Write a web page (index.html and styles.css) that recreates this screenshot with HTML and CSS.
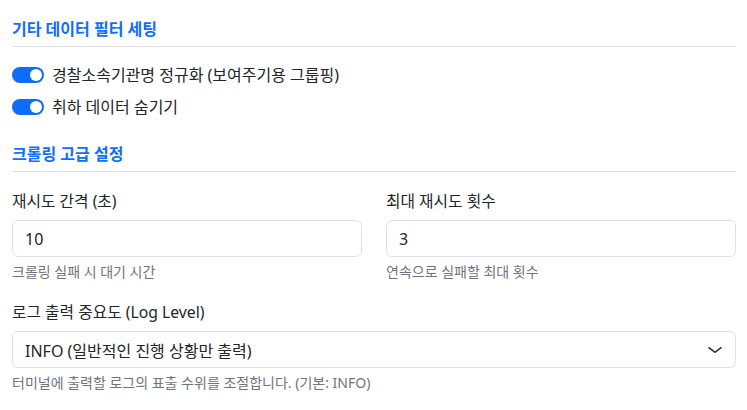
FILE: index.html
```html
<!DOCTYPE html>
<html lang="ko">
<head>
<meta charset="utf-8">
<title>설정</title>
<link rel="stylesheet" href="styles.css">
</head>
<body>
<div class="page">
  <section class="group">
    <h6 class="group-title">기타 데이터 필터 세팅</h6>
    <div class="switches">
      <label class="switch-row">
        <span class="switch"><span class="knob"></span></span>
        <span class="switch-label">경찰소속기관명 정규화 (보여주기용 그룹핑)</span>
      </label>
      <label class="switch-row">
        <span class="switch"><span class="knob"></span></span>
        <span class="switch-label">취하 데이터 숨기기</span>
      </label>
    </div>
  </section>

  <section class="group group-second">
    <h6 class="group-title">크롤링 고급 설정</h6>
    <div class="fields-grid">
      <div class="field">
        <label class="field-label">재시도 간격 (초)</label>
        <input class="field-input" type="text" value="10">
        <div class="field-help">크롤링 실패 시 대기 시간</div>
      </div>
      <div class="field">
        <label class="field-label">최대 재시도 횟수</label>
        <input class="field-input" type="text" value="3">
        <div class="field-help">연속으로 실패할 최대 횟수</div>
      </div>
    </div>
    <div class="field field-wide">
      <label class="field-label">로그 출력 중요도 (Log Level)</label>
      <div class="field-select">
        <span>INFO (일반적인 진행 상황만 출력)</span>
        <svg class="chevron" width="16" height="12" viewBox="0 0 16 16" preserveAspectRatio="none"><path d="m2 5 6 6 6-6" fill="none" stroke="#343a40" stroke-width="2" stroke-linecap="round" stroke-linejoin="round"/></svg>
      </div>
      <div class="field-help">터미널에 출력할 로그의 표출 수위를 조절합니다. (기본: INFO)</div>
    </div>
  </section>
</div>
</body>
</html>
```

FILE: styles.css
```css
* { box-sizing: border-box; }

html, body {
  margin: 0;
  padding: 0;
  background: #ffffff;
}

body {
  font-family: "Noto Sans", "Noto Sans CJK KR", sans-serif;
  color: #212529;
  font-size: 15px;
}

.page {
  padding: 18px 11px 0 12px;
}

.group-title {
  margin: 0;
  font-size: 16px;
  line-height: 22px;
  font-weight: 600;
  color: #0d6efd;
  padding-bottom: 6px;
  border-bottom: 1px solid #dee2e6;
}

.switches {
  display: flex;
  flex-direction: column;
  gap: 8px;
  margin-top: 16px;
}

.switch-row {
  display: flex;
  align-items: center;
  gap: 8px;
  height: 24px;
}

.switch {
  width: 32px;
  height: 16px;
  border-radius: 8px;
  background: #0d6efd;
  display: flex;
  align-items: center;
  justify-content: flex-end;
  padding-right: 2px;
}

.knob {
  width: 12px;
  height: 12px;
  border-radius: 50%;
  background: #ffffff;
}

.switch-label {
  font-size: 16px;
  line-height: 24px;
}

.group-second {
  margin-top: 24px;
}

.fields-grid {
  display: grid;
  grid-template-columns: 1fr 1fr;
  column-gap: 24px;
  margin-top: 18px;
}

.field {
  display: flex;
  flex-direction: column;
}

.field-wide {
  margin-top: 19px;
}

.field-label {
  font-size: 15.75px;
  line-height: 22px;
  margin-bottom: 8px;
}

.field-input,
.field-select {
  height: 37px;
  border: 1px solid #dee2e6;
  border-radius: 6px;
  padding: 0 12px;
  font-family: "Noto Sans", "Noto Sans CJK KR", sans-serif;
  font-size: 16px;
  color: #212529;
  background: #ffffff;
  width: 100%;
}

.field-input {
  outline: none;
}

.field-select {
  display: flex;
  align-items: center;
  justify-content: space-between;
  padding-right: 12px;
}

.chevron {
  display: block;
  flex: none;
}

.field-help {
  margin-top: 5px;
  font-size: 14px;
  line-height: 20px;
  color: #6c757d;
}
```
